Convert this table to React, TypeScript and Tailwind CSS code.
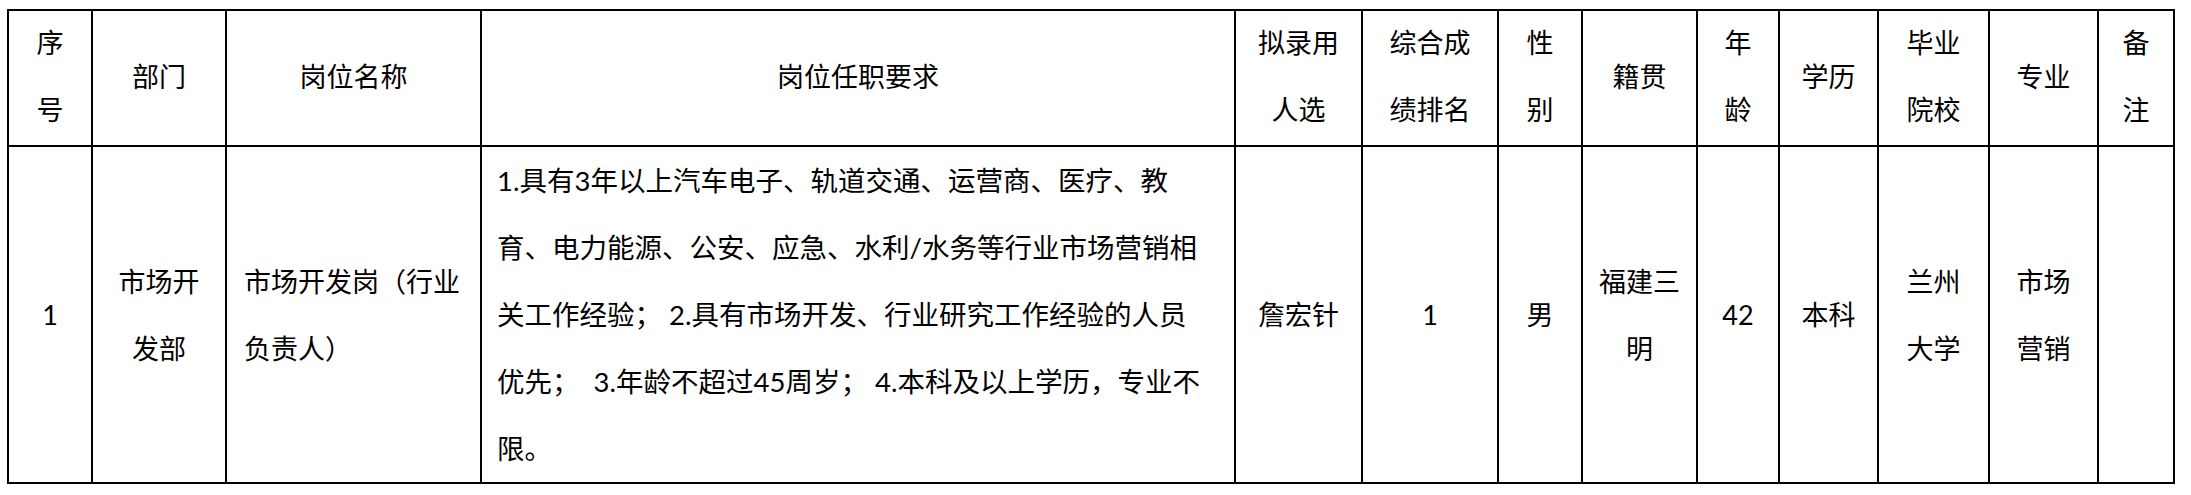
const HEADERS = [
  { lines: ['序', '号'], col: 'w-[84px]' },
  { lines: ['部门'], col: 'w-[134px]' },
  { lines: ['岗位名称'], col: 'w-[255px]' },
  { lines: ['岗位任职要求'], col: 'w-[754px]' },
  { lines: ['拟录用', '人选'], col: 'w-[127px]' },
  { lines: ['综合成', '绩排名'], col: 'w-[136px]' },
  { lines: ['性', '别'], col: 'w-[84px]' },
  { lines: ['籍贯'], col: 'w-[115px]' },
  { lines: ['年', '龄'], col: 'w-[82px]' },
  { lines: ['学历'], col: 'w-[99px]' },
  { lines: ['毕业', '院校'], col: 'w-[111px]' },
  { lines: ['专业'], col: 'w-[109px]' },
  { lines: ['备', '注'], col: 'w-[76px]' },
];

const ROW = [
  { lines: ['1'], align: 'text-center' },
  { lines: ['市场开', '发部'], align: 'text-center' },
  { lines: ['市场开发岗（行业', '负责人）'], align: 'text-left pl-[17px]' },
  {
    lines: [
      '1.具有3年以上汽车电子、轨道交通、运营商、医疗、教',
      '育、电力能源、公安、应急、水利/水务等行业市场营销相',
      '关工作经验； 2.具有市场开发、行业研究工作经验的人员',
      '优先；  3.年龄不超过45周岁； 4.本科及以上学历，专业不',
      '限。',
    ],
    align: 'text-left pl-[15px] text-[27.5px]',
  },
  { lines: ['詹宏针'], align: 'text-center' },
  { lines: ['1'], align: 'text-center' },
  { lines: ['男'], align: 'text-center' },
  { lines: ['福建三', '明'], align: 'text-center' },
  { lines: ['42'], align: 'text-center' },
  { lines: ['本科'], align: 'text-center' },
  { lines: ['兰州', '大学'], align: 'text-center' },
  { lines: ['市场', '营销'], align: 'text-center' },
  { lines: [], align: 'text-center' },
];

export default function App() {
  return (
    <div className="min-h-screen bg-white pl-[7px] pt-[9px] text-black">
      <table className="table-fixed border-collapse w-[2168px] text-[27px] leading-[67px]">
        <colgroup>
          {HEADERS.map((h, i) => (
            <col key={i} className={h.col} />
          ))}
        </colgroup>
        <thead>
          {/* header row */}
          <tr className="h-[136px]">
            {HEADERS.map((h, i) => (
              <th
                key={i}
                className="border-2 border-black p-0 text-center align-middle font-normal font-['Liberation_Serif','Noto_Sans_CJK_SC',serif]"
              >
                {h.lines.map((l) => (
                  <div key={l}>{l}</div>
                ))}
              </th>
            ))}
          </tr>
        </thead>
        <tbody>
          <tr className="h-[337px]">
            {ROW.map((c, i) => (
              <td
                key={i}
                className={`border-2 border-black p-0 align-middle font-['Lato','Noto_Sans_CJK_SC',sans-serif] ${c.align}`}
              >
                {c.lines.map((l, j) => (
                  <div key={j} className="whitespace-pre">
                    {l}
                  </div>
                ))}
              </td>
            ))}
          </tr>
        </tbody>
      </table>
    </div>
  );
}
